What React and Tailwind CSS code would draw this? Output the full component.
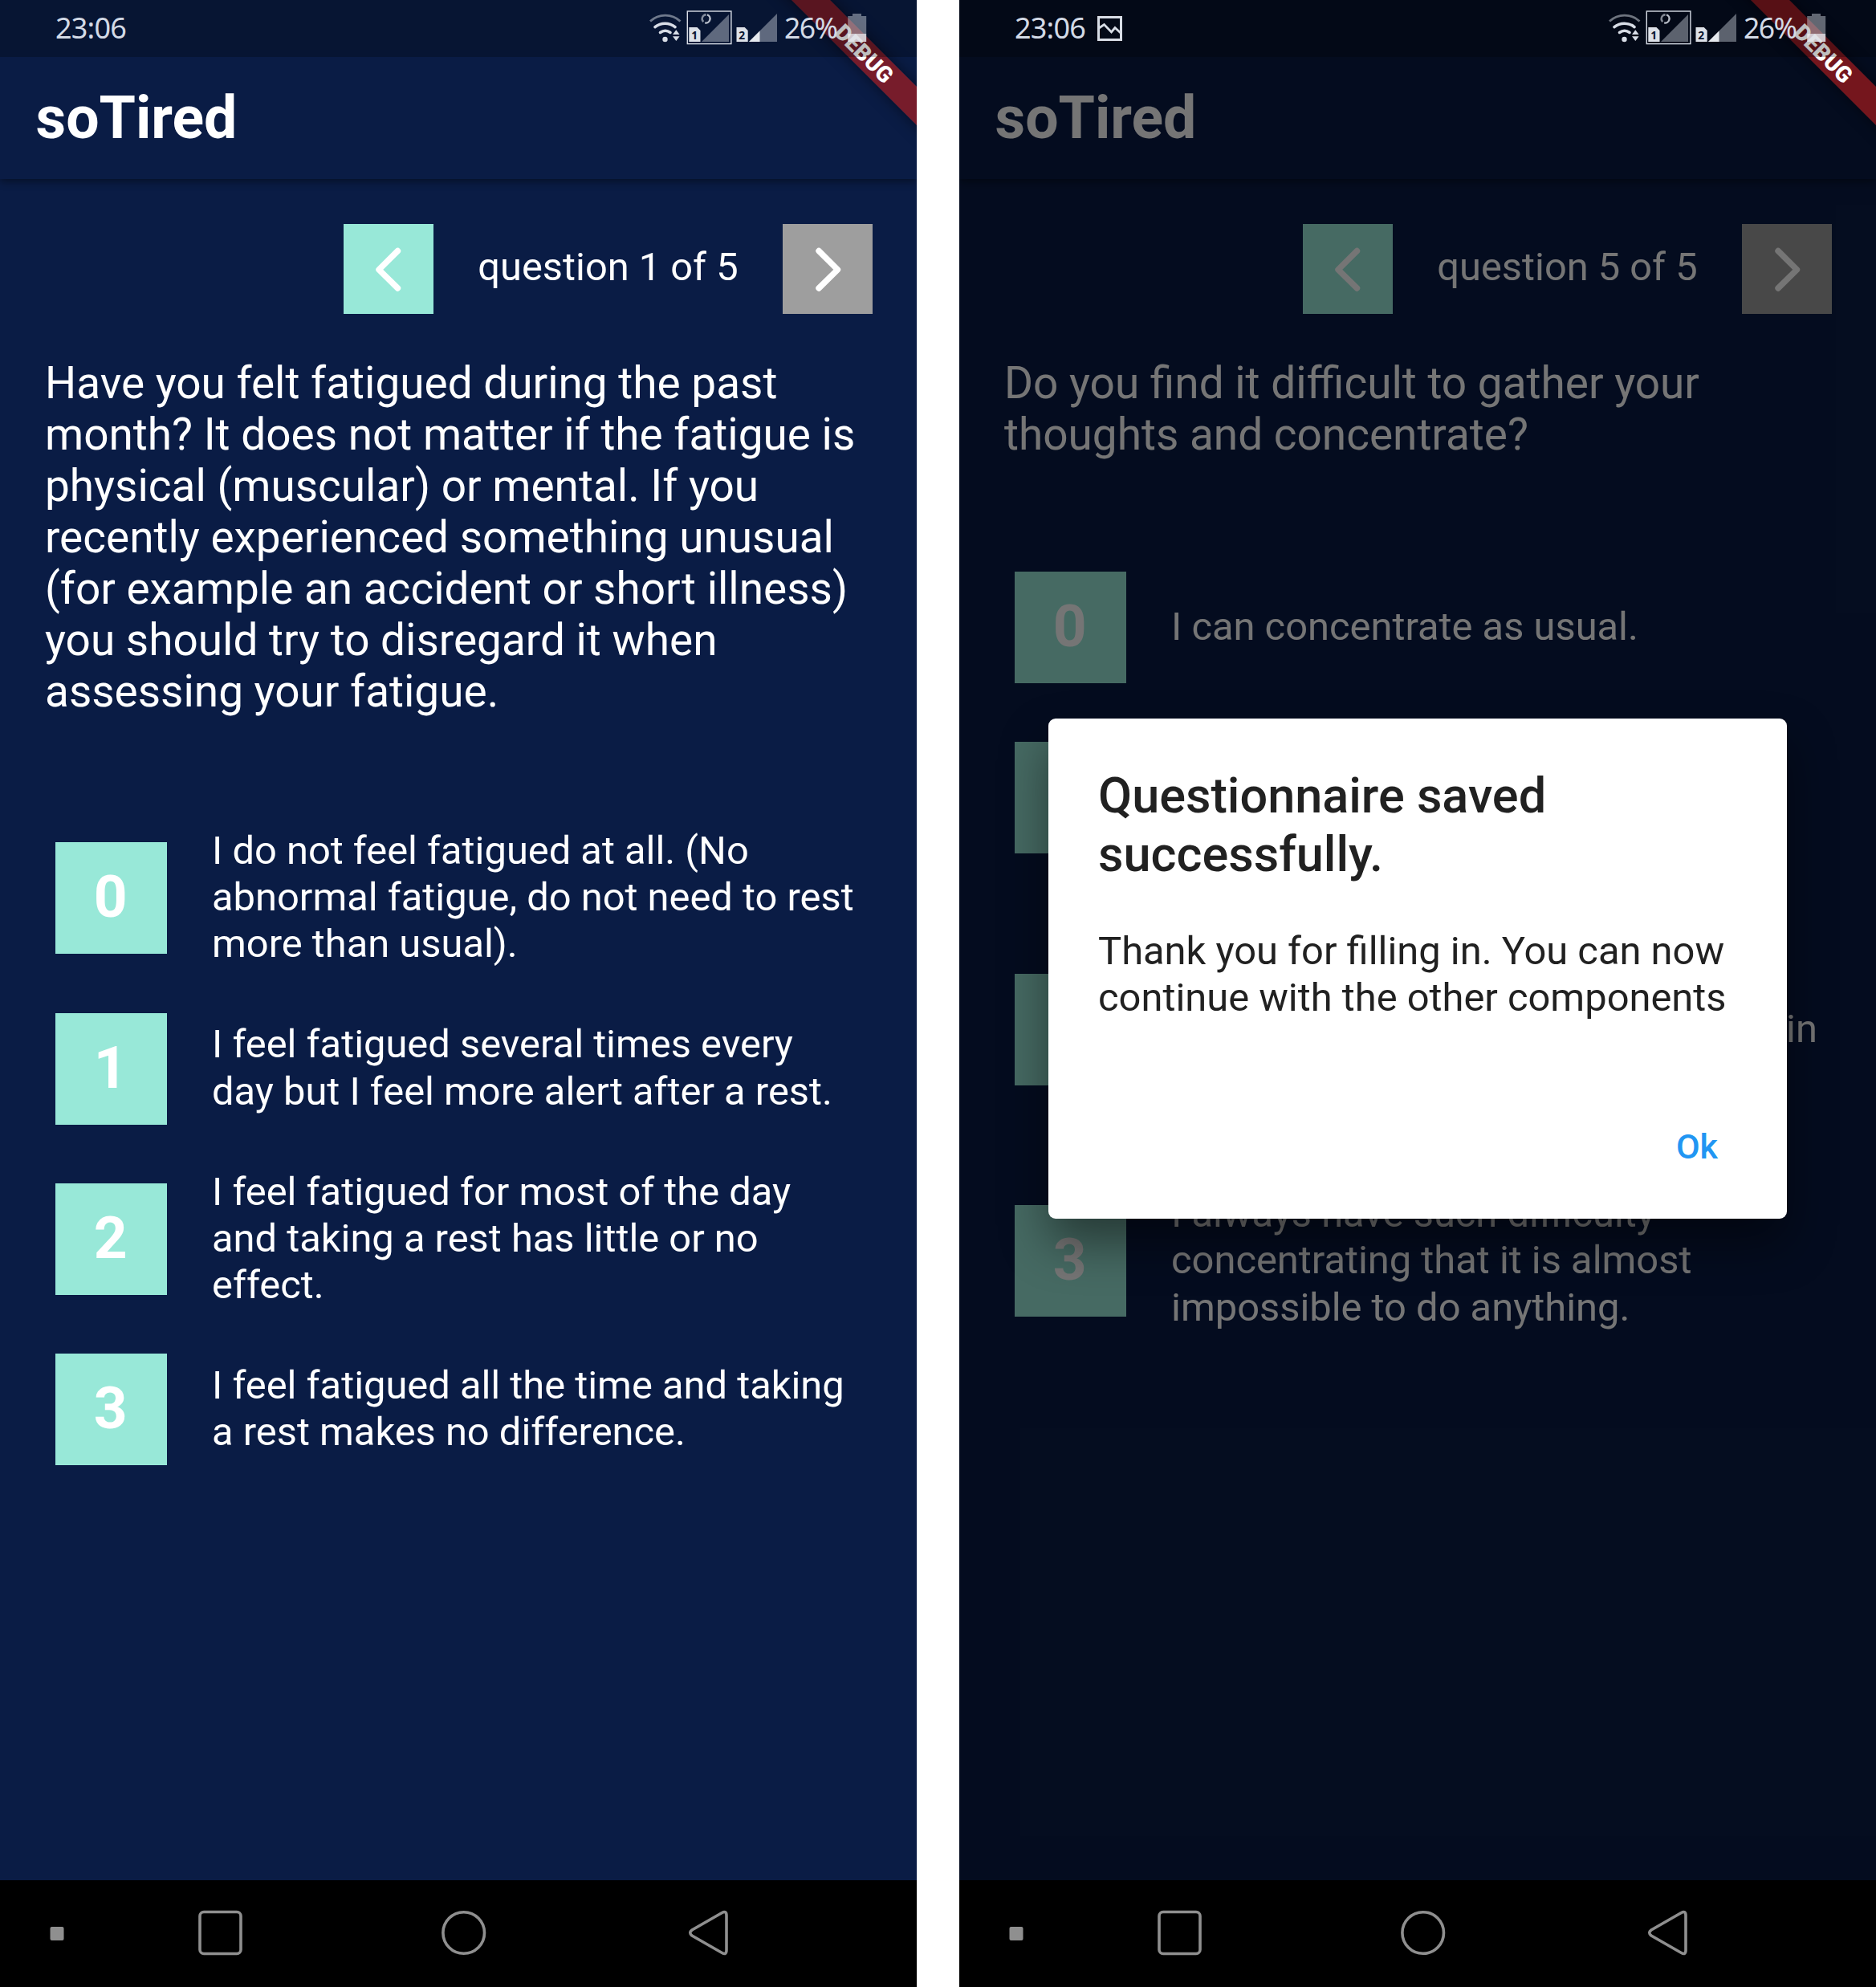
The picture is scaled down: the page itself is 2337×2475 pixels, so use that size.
const LEFT_OPTIONS = [
  { lines: ["I do not feel fatigued at all. (No", "abnormal fatigue, do not need to rest", "more than usual)."] },
  { lines: ["I feel fatigued several times every", "day but I feel more alert after a rest."] },
  { lines: ["I feel fatigued for most of the day", "and taking a rest has little or no", "effect."] },
  { lines: ["I feel fatigued all the time and taking", "a rest makes no difference."] },
];

const RIGHT_OPTIONS = [
  { lines: ["I can concentrate as usual."] },
  { lines: ["I sometimes lose concentration", "when reading a newspaper, for", "example, or watching TV."] },
  {
    tall: true,
    lines: [
      "I find it so difficult to concentrate",
      "that I have problems, for example",
      "reading a newspaper or taking part in",
      "a conversation with a group of",
      "people.",
    ],
  },
  { lines: ["I always have such difficulty", "concentrating that it is almost", "impossible to do anything."] },
];

function SignalIcons() {
  return (
    <svg className="h-[70px] w-[165px] shrink-0" viewBox="805 0 165 70" fill="none">
      <path d="M810 26.5 A27.5 27.5 0 0 1 847.5 26.5" stroke="#d8dde6" strokeOpacity="0.5" strokeWidth="2.8" />
      <path d="M816 33.6 A20 20 0 0 1 841 33.6" stroke="#d8dde6" strokeWidth="3.6" strokeLinecap="round" />
      <path d="M822.5 40.4 A11 11 0 0 1 835 40.4" stroke="#d8dde6" strokeWidth="3.6" strokeLinecap="round" />
      <circle cx="828.5" cy="49" r="3.2" fill="#d8dde6" />
      <path d="M838 43 L842.3 37.3 L846.6 43 Z M838 45.2 L842.3 51 L846.6 45.2 Z" fill="#d8dde6" />
      <rect x="856.3" y="14" width="54.6" height="40.6" stroke="#d8dde6" strokeWidth="1.4" />
      <path d="M874 52 L908 18 V52 Z" fill="#d8dde6" fillOpacity="0.42" />
      <path d="M858.3 52 V34 H868.5 L872.5 38 V52 Z" fill="#dde1e8" />
      <text x="865.3" y="48.6" textAnchor="middle" fontSize="13.8" fontWeight="700" fill="#0a1630" fontFamily="Noto Sans">1</text>
      <path d="M876.3 27.2 A5.2 5.2 0 0 1 879.6 18.2" stroke="#d8dde6" strokeOpacity="0.6" strokeWidth="2.4" />
      <path d="M881 18.4 A5.2 5.2 0 0 1 878.2 28.4" stroke="#d8dde6" strokeOpacity="0.85" strokeWidth="2.4" />
      <path d="M917.5 52 V34 H927.7 L931.7 38 V52 Z" fill="#dde1e8" />
      <text x="924.3" y="48.6" textAnchor="middle" fontSize="13.8" fontWeight="700" fill="#0a1630" fontFamily="Noto Sans">2</text>
      <path d="M933 52 L968 17 V52 Z" fill="#d8dde6" fillOpacity="0.42" />
      <path d="M933 52 L946.5 38.5 V52 Z" fill="#e6e9ee" />
    </svg>
  );
}

function BatteryIcon() {
  return (
    <svg className="h-[70px] w-[24px] shrink-0" viewBox="1056 0 24 70">
      <path d="M1056.2 42 V20 H1062 V17 H1073 V20 H1079.2 V42 Z" fill="#d8dde6" fillOpacity="0.45" />
      <path d="M1056.2 42 H1079.2 V52 H1056.2 Z" fill="#e6e9ee" fillOpacity="0.85" />
    </svg>
  );
}

function PictureIcon() {
  return (
    <svg className="ml-[15px] h-[31px] w-[31px] shrink-0" viewBox="0 0 31 31" fill="none" stroke="#d8dde6">
      <rect x="1.5" y="1.5" width="28" height="28" strokeWidth="3" />
      <path d="M2 15 L8.5 10.5 L17.5 20 L22 14.5 L29 21" strokeWidth="2.8" />
    </svg>
  );
}

function StatusBar({ picture }) {
  return (
    <div className="absolute inset-x-0 top-0 h-[71px] bg-black/25 font-['Noto_Sans'] text-[#d3dae6]">
      <div className="flex h-[70px] items-center">
        <div className="flex w-[805px] shrink-0 items-center pl-[69px]">
          <span className="w-[88px] text-[36px] tracking-[-0.8px] whitespace-nowrap">23:06</span>
          {picture && <PictureIcon />}
        </div>
        <SignalIcons />
        <span className="ml-[7px] w-[79px] shrink-0 pb-[1px] text-[35.5px] tracking-[-1.5px] whitespace-nowrap">26%</span>
        <BatteryIcon />
      </div>
    </div>
  );
}

function DebugRibbon() {
  return (
    <div className="absolute top-0 right-0 h-[200px] w-[200px] overflow-hidden">
      <div className="absolute top-[49px] left-[-16px] flex h-[34px] w-[300px] rotate-45 items-center justify-center bg-[#b71c1c]/63 pt-[1px] pl-[2px] text-[28px] leading-none font-black text-white shadow-[0_0_18px_rgba(0,0,0,0.5)]">
        DEBUG
      </div>
    </div>
  );
}

function ArrowButton({ direction, muted }) {
  return (
    <div className={`flex h-[112px] w-[112px] items-center justify-center ${muted ? "bg-[#9e9e9e]" : "bg-[#98e8d8]"}`}>
      <svg className="h-[60px] w-[40px]" viewBox="0 0 40 60" fill="none" stroke="#fff" strokeWidth="7.4" strokeLinecap="round" strokeLinejoin="round">
        {direction === "left" ? <path d="M31.5 7.5 L8 30.8 L31.5 54" /> : <path d="M9 7.5 L32.5 30.8 L9 54" />}
      </svg>
    </div>
  );
}

function Lines({ lines }) {
  return lines.map((line) => (
    <span key={line} className="block whitespace-nowrap">
      {line}
    </span>
  ));
}

function Option({ index, option }) {
  return (
    <li className={`flex items-center pl-[69px] ${option.tall ? "h-[364.6px]" : "h-[212.4px]"}`}>
      <span className="flex h-[139px] w-[139px] shrink-0 items-center justify-center bg-[#98e8d8] pr-[1.5px] pb-[2px] text-[73px] leading-none font-bold">
        {index}
      </span>
      <p className="ml-[56px] pb-[1px] text-[48.85px] leading-[58.2px]">
        <Lines lines={option.lines} />
      </p>
    </li>
  );
}

function NavBar() {
  return (
    <nav className="flex h-[133px] items-center bg-black">
      <svg className="h-[133px] w-full" viewBox="0 2342 1142 133" fill="none" stroke="#8f8f8f" strokeWidth="3.6" strokeLinejoin="round">
        <rect x="62.5" y="2400" width="17" height="17" rx="2" fill="#8f8f8f" stroke="none" />
        <rect x="249" y="2381.5" width="51" height="52" rx="5" />
        <circle cx="577.7" cy="2407.5" r="25.8" />
        <path d="M899.5 2382.5 Q905 2379.5 905 2386 V2429 Q905 2435.5 899.5 2432.5 L862 2411 Q857.5 2407.5 862 2404 Z" />
      </svg>
    </nav>
  );
}

function Phone({ step, question, options, gapClass, picture, children }) {
  return (
    <section className="relative flex h-[2475px] w-[1142px] flex-col overflow-hidden bg-[#0a1c45] text-white">
      <header className="relative flex h-[223px] items-end pb-[33px] pl-[44.5px] shadow-[0_3px_10px_rgba(0,0,0,0.45)]">
        <h1 className="text-[73.3px] leading-[86px] font-bold">soTired</h1>
      </header>
      <div className="mt-[55.5px] flex items-center justify-end pr-[55px]">
        <ArrowButton direction="left" />
        <span className="w-[435px] pb-[4px] text-center text-[48.8px] leading-[58px]">{step}</span>
        <ArrowButton direction="right" muted />
      </div>
      <p className="mt-[54.5px] pl-[56px] text-[54.95px] leading-[64px]">
        <Lines lines={question} />
      </p>
      <ul className={gapClass}>
        {options.map((option, i) => (
          <Option key={i} index={i} option={option} />
        ))}
      </ul>
      <div className="mt-auto">
        <NavBar />
      </div>
      {children}
      <DebugRibbon />
      <StatusBar picture={picture} />
    </section>
  );
}

function SavedDialog() {
  return (
    <>
      <div className="absolute inset-x-0 top-0 h-[2342px] bg-black/54" />
      <div
        role="dialog"
        className="absolute top-[895px] left-[111px] flex h-[623px] w-[920px] flex-col rounded-[9px] bg-white pt-[60px] pr-[86px] pl-[62px] text-[#212121] shadow-[0_30px_60px_rgba(0,0,0,0.45)]"
      >
        <h2 className="text-[61.2px] leading-[73px] font-medium">
          <Lines lines={["Questionnaire saved", "successfully."]} />
        </h2>
        <p className="mt-[55px] text-[48.85px] leading-[58.2px]">
          <Lines lines={["Thank you for filling in. You can now", "continue with the other components"]} />
        </p>
        <button className="mt-[131px] self-end text-[43px] leading-[50px] font-medium text-[#2196f3]">Ok</button>
      </div>
    </>
  );
}

export default function App() {
  return (
    <main className="flex h-[2475px] w-[2337px] justify-between bg-white font-['Roboto',sans-serif]">
      <Phone
        step="question 1 of 5"
        question={[
          "Have you felt fatigued during the past",
          "month? It does not matter if the fatigue is",
          "physical (muscular) or mental. If you",
          "recently experienced something unusual",
          "(for example an accident or short illness)",
          "you should try to disregard it when",
          "assessing your fatigue.",
        ]}
        options={LEFT_OPTIONS}
        gapClass="mt-[119.6px]"
      />
      <Phone
        step="question 5 of 5"
        question={["Do you find it difficult to gather your", "thoughts and concentrate?"]}
        options={RIGHT_OPTIONS}
        gapClass="mt-[102.4px]"
        picture
      >
        <SavedDialog />
      </Phone>
    </main>
  );
}
